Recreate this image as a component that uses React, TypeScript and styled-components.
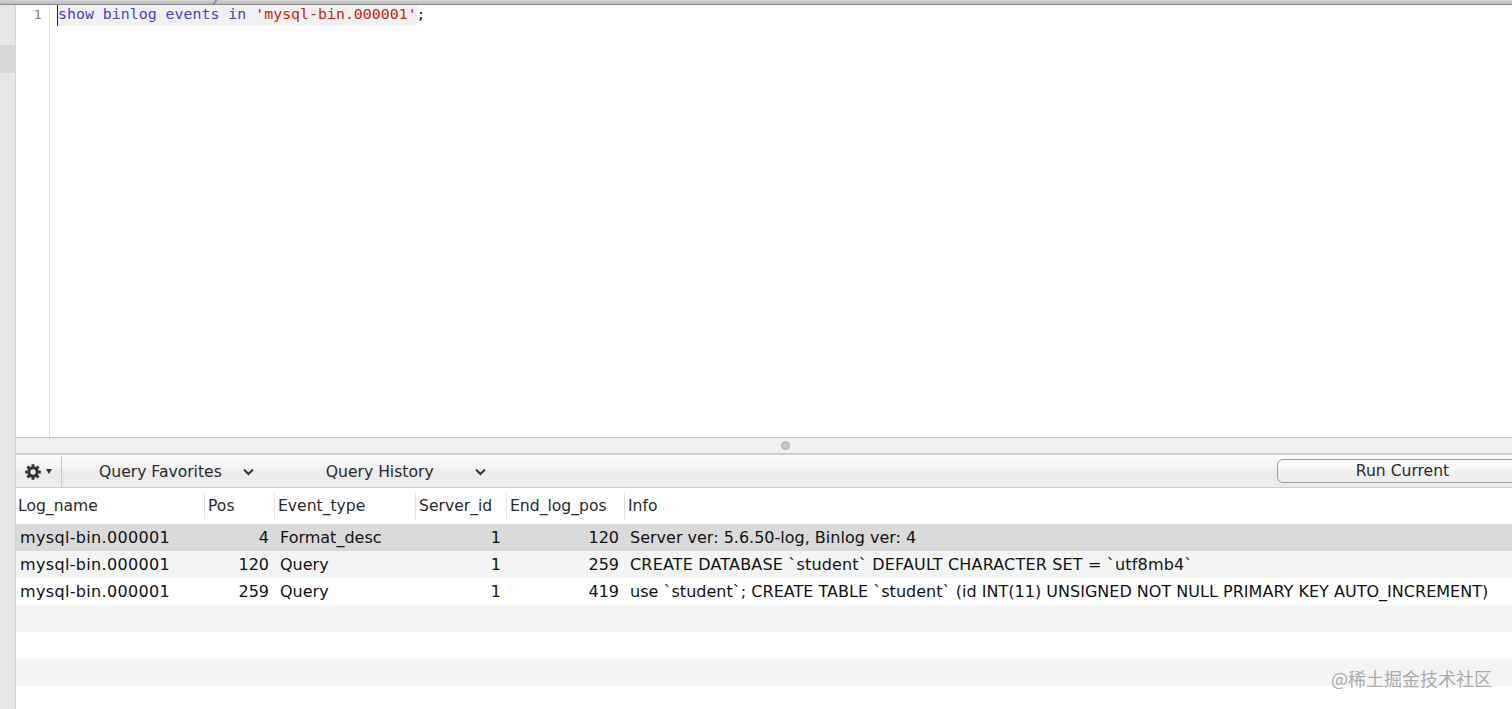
import React from "react";
import styled, { createGlobalStyle } from "styled-components";

const GlobalStyle = createGlobalStyle`
  html, body {
    margin: 0;
    padding: 0;
    height: 100%;
    overflow: hidden;
    background: #fff;
  }
`;

const Page = styled.div`
  display: flex;
  flex-direction: column;
  height: 709px;
  width: 1512px;
  overflow: hidden;
  position: relative;
  font-family: "DejaVu Sans", sans-serif;
  color: #1c1c1c;
`;

const TopStrip = styled.div`
  height: 4px;
  flex: none;
  position: relative;
  background: linear-gradient(#d4d4d4, #bcbcbc);
  border-bottom: 1px solid #8a8a8a;
`;

const TabEdge = styled.div`
  position: absolute;
  left: 214px;
  top: 0;
  width: 2px;
  height: 4px;
  background: #8a8a8a;
  transform: skewX(-40deg);
`;

const Body = styled.div`
  display: flex;
  flex: 1;
  min-height: 0;
`;

const LeftRail = styled.div`
  width: 15px;
  flex: none;
  background: #e6e7e8;
  border-right: 1px solid #d6d6d6;
  padding-top: 40px;
`;

const RailMark = styled.div`
  height: 28px;
  background: #d6d7d8;
`;

const Main = styled.div`
  flex: 1;
  min-width: 0;
  display: flex;
  flex-direction: column;
`;

const Editor = styled.div`
  height: 432px;
  flex: none;
  display: flex;
  background: #fff;
`;

const Gutter = styled.div`
  width: 34px;
  flex: none;
  border-right: 1px solid #dedede;
  text-align: right;
  padding: 1px 7px 0 0;
  box-sizing: border-box;
  font: 13px/18px "DejaVu Sans", sans-serif;
  color: #808080;
`;

const Code = styled.div`
  padding: 0 0 0 8px;
  font: 14.9px/18px "DejaVu Sans Mono", monospace;
`;

const CodeLine = styled.div`
  display: inline-block;
  height: 21px;
  line-height: 18px;
  border-left: 1.5px solid #222;
  margin-left: -1px;
  white-space: pre;
`;

const Highlight = styled.span`
  background: #f1f1f1;
  display: inline-block;
  height: 21px;
`;

const Keyword = styled.span`
  color: #4a3fd6;
`;

const Str = styled.span`
  color: #c8230f;
`;

const Splitter = styled.div`
  height: 15px;
  flex: none;
  display: flex;
  align-items: center;
  justify-content: center;
  padding-left: 42px;
  background: #f0f0f0;
  border-top: 1px solid #c6c6c6;
  border-bottom: 2px solid #cfcfcf;
`;

const Dot = styled.div`
  width: 9px;
  height: 9px;
  border-radius: 50%;
  background: #c4c4c4;
  border: 1px solid #b0b0b0;
  box-sizing: border-box;
`;

const Toolbar = styled.div`
  height: 33px;
  flex: none;
  box-sizing: border-box;
  display: flex;
  align-items: center;
  padding-top: 1px;
  background: linear-gradient(#fcfcfc 0%, #f5f5f5 38%, #ececec 48%, #ececec 100%);
  border-bottom: 1px solid #cdcdcd;
  font-size: 15.6px;
  color: #2a2a2a;
`;

const GearButton = styled.div`
  width: 46px;
  height: 100%;
  flex: none;
  box-sizing: border-box;
  border-right: 1px solid #c9c9c9;
  display: flex;
  align-items: center;
  padding-left: 9px;
  gap: 5px;
  color: #333;
`;

const Gear = () => (
  <svg width="16" height="16" viewBox="0 0 16 16">
    <circle cx="8" cy="8" r="4.2" fill="none" stroke="#333" strokeWidth="3" />
    {[0, 45, 90, 135].map((a) => (
      <path
        key={a}
        d="M8 0.2 V15.8"
        stroke="#333"
        strokeWidth="3"
        transform={`rotate(${a} 8 8)`}
        strokeDasharray="3 9.6 3"
      />
    ))}
  </svg>
);

const Caret = styled.div`
  width: 0;
  height: 0;
  border-left: 3.5px solid transparent;
  border-right: 3.5px solid transparent;
  border-top: 5px solid #333;
`;

const Menu = styled.div<{ $left: number; $gap: number }>`
  display: flex;
  align-items: center;
  margin-left: ${(p) => p.$left}px;
  gap: ${(p) => p.$gap}px;
  white-space: nowrap;
`;

const Chevron = () => (
  <svg width="11" height="8" viewBox="0 0 11 8">
    <path d="M1 1.5 L5.5 6 L10 1.5" fill="none" stroke="#333" strokeWidth="2" />
  </svg>
);

const RunButton = styled.div`
  margin-left: auto;
  margin-right: -16px;
  margin-top: -1px;
  width: 251px;
  height: 24px;
  box-sizing: border-box;
  border: 1px solid #9c9c9c;
  border-radius: 6px;
  background: linear-gradient(#fcfcfc 0%, #f6f6f6 40%, #eeeeee 55%, #eeeeee 100%);
  text-align: center;
  line-height: 23px;
`;

const columns = "188px 70px 141px 91px 118px 1fr";

const Row = styled.div<{ $tone: "selected" | "stripe" | "plain" }>`
  display: grid;
  grid-template-columns: ${columns};
  height: 27px;
  flex: none;
  align-items: center;
  font-size: 16px;
  color: #111;
  white-space: nowrap;
  background: ${(p) =>
    p.$tone === "selected" ? "#dadada" : p.$tone === "stripe" ? "#f3f5f5" : "#fff"};
`;

const HeaderRow = styled.div`
  display: grid;
  grid-template-columns: ${columns};
  height: 35px;
  padding-bottom: 1px;
  flex: none;
  align-items: center;
  font-size: 15.6px;
  color: #2a2a2a;
  background: #fff;
`;

const HeaderCell = styled.div<{ $first?: boolean }>`
  height: 26px;
  line-height: 26px;
  box-sizing: border-box;
  padding-left: ${(p) => (p.$first ? "2px" : "3px")};
  border-left: ${(p) => (p.$first ? "none" : "1px solid #e2e2e2")};
`;

const Cell = styled.div<{ $right?: boolean; $spacing?: number }>`
  padding: ${(p) => (p.$right ? "0 5px 0 0" : "0 0 0 6px")};
  text-align: ${(p) => (p.$right ? "right" : "left")};
  letter-spacing: ${(p) => p.$spacing ?? 0}px;

  &:first-child {
    padding-left: 4px;
  }
`;

const Watermark = styled.div`
  position: absolute;
  right: 20px;
  top: 666px;
  font: 18px/24px "Noto Sans CJK SC", sans-serif;
  color: #ababab;
  white-space: nowrap;
`;

const headers = ["Log_name", "Pos", "Event_type", "Server_id", "End_log_pos", "Info"];

const rows = [
  ["mysql-bin.000001", "4", "Format_desc", "1", "120", "Server ver: 5.6.50-log, Binlog ver: 4"],
  ["mysql-bin.000001", "120", "Query", "1", "259", "CREATE DATABASE `student` DEFAULT CHARACTER SET = `utf8mb4`"],
  ["mysql-bin.000001", "259", "Query", "1", "419", "use `student`; CREATE TABLE `student` (id INT(11) UNSIGNED NOT NULL PRIMARY KEY AUTO_INCREMENT)"],
];

const rightAligned = [1, 3, 4];

const spacingFor = (r: number, i: number) => {
  if (i === 0) return 0.34;
  if (i === 5 && r === 1) return 0.17;
  if (i === 5 && r === 2) return 0.02;
  return 0;
};

const App = () => {
  return (
    <Page>
      <GlobalStyle />
      <TopStrip>
        <TabEdge />
      </TopStrip>
      <Body>
        <LeftRail>
          <RailMark />
        </LeftRail>
        <Main>
          <Editor>
            <Gutter>1</Gutter>
            <Code>
              <CodeLine>
                <Highlight>
                  <Keyword>show binlog events in</Keyword> <Str>'mysql-bin.000001'</Str>
                </Highlight>
                ;
              </CodeLine>
            </Code>
          </Editor>
          <Splitter>
            <Dot />
          </Splitter>
          <Toolbar>
            <GearButton>
              <Gear />
              <Caret />
            </GearButton>
            <Menu $left={37} $gap={21}>
              Query Favorites
              <Chevron />
            </Menu>
            <Menu $left={72} $gap={41}>
              Query History
              <Chevron />
            </Menu>
            <RunButton>Run Current</RunButton>
          </Toolbar>
          <HeaderRow>
            {headers.map((h, i) => (
              <HeaderCell key={h} $first={i === 0}>
                {h}
              </HeaderCell>
            ))}
          </HeaderRow>
          {rows.map((row, r) => (
            <Row key={r} $tone={r === 0 ? "selected" : r === 1 ? "stripe" : "plain"}>
              {row.map((c, i) => (
                <Cell key={i} $right={rightAligned.includes(i)} $spacing={spacingFor(r, i)}>
                  {c}
                </Cell>
              ))}
            </Row>
          ))}
          <Row $tone="stripe" />
          <Row $tone="plain" />
          <Row $tone="stripe" />
          <Row $tone="plain" />
        </Main>
      </Body>
      <Watermark>@稀土掘金技术社区</Watermark>
    </Page>
  );
};

export default App;
